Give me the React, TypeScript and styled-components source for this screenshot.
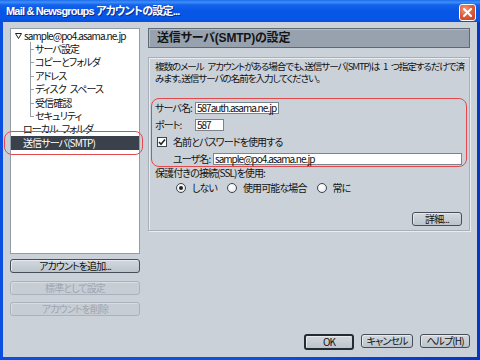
import React from 'react';
import styled, { createGlobalStyle } from 'styled-components';

const GlobalStyle = createGlobalStyle`
  html, body {
    margin: 0;
    padding: 0;
    background: #cbd1d9;
  }
  body {
    font-family: 'Liberation Sans Narrow', 'Noto Sans CJK JP', sans-serif;
    font-size: 10px;
    line-height: 12px;
    letter-spacing: -0.9px;
    font-feature-settings: 'palt';
    color: #111;
  }
`;

// en space keeps the wide gaps of the original font
const SP = '\u2002';

const treeItems = ['サーバ設定', 'コピーとフォルダ', 'アドレス', `ディスク${SP}スペース`, '受信確認', 'セキュリティ'];

const App: React.FC = () => {
  return (
    <>
      <GlobalStyle />
      <Window>
        <TitleBar>
          <Title>Mail &amp; Newsgroups アカウントの設定...</Title>
          <CloseButton>
            <svg width="9" height="9" viewBox="0 0 9 9">
              <path d="M1 1 L8 8 M8 1 L1 8" stroke="#fff" strokeWidth="2" strokeLinecap="square" />
            </svg>
          </CloseButton>
        </TitleBar>
        <Body>
          <Columns>
            <Sidebar>
              <Tree>
                <TreeRow $indent={4}>
                  <Twisty>
                    <svg width="7" height="6" viewBox="0 0 7 6">
                      <path d="M0.5 0.5 H6.5 L3.5 5.5 Z" fill="none" stroke="#222" strokeWidth="1" />
                    </svg>
                  </Twisty>
                  sample@po4.asama.ne.jp
                </TreeRow>
                {treeItems.map((t, i) => (
                  <ChildRow key={t} $last={i === treeItems.length - 1}>
                    {t}
                  </ChildRow>
                ))}
                <TreeRow $indent={12}>{`ローカル${SP}フォルダ`}</TreeRow>
                <TreeRow $indent={12} $selected>
                  送信サーバ(SMTP)
                  <RedRing />
                </TreeRow>
              </Tree>
              <SideButtons>
                <Button>アカウントを追加...</Button>
                <Button disabled>標準として設定</Button>
                <Button disabled>アカウントを削除</Button>
              </SideButtons>
            </Sidebar>
            <Main>
              <Header>送信サーバ(SMTP)の設定</Header>
              <Group>
                <Description>
                  {`複数のメール${SP}アカウントがある場合でも、送信サーバ(SMTP)は${SP}1${SP}つ指定するだけで済`}
                  <br />
                  みます。送信サーバの名前を入力してください。
                </Description>
                <RedBox>
                  <FieldRow>
                    <Label>サーバ名:</Label>
                    <Input $w={84}>587auth.asama.ne.jp</Input>
                  </FieldRow>
                  <FieldRow>
                    <Label>ポート:</Label>
                    <Input $w={29}>587</Input>
                  </FieldRow>
                  <FieldRow $indent={2}>
                    <CheckBox>
                      <svg width="8" height="8" viewBox="0 0 8 8">
                        <path d="M1 4 L3 6.2 L7 1.5" fill="none" stroke="#222" strokeWidth="1.6" />
                      </svg>
                    </CheckBox>
                    <CheckLabel>名前とパスワードを使用する</CheckLabel>
                  </FieldRow>
                  <FieldRow $indent={18}>
                    <Label>ユーザ名:</Label>
                    <Input $grow>sample@po4.asama.ne.jp</Input>
                  </FieldRow>
                </RedBox>
                <SslLabel>保護付きの接続(SSL)を使用:</SslLabel>
                <RadioRow>
                  <RadioOption>
                    <Radio $checked />
                    しない
                  </RadioOption>
                  <RadioOption>
                    <Radio />
                    使用可能な場合
                  </RadioOption>
                  <RadioOption>
                    <Radio />
                    常に
                  </RadioOption>
                </RadioRow>
                <DetailRow>
                  <Button $w={50}>詳細...</Button>
                </DetailRow>
              </Group>
            </Main>
          </Columns>
          <Footer>
            <Button $w={50} $default>OK</Button>
            <Button $w={52}>キャンセル</Button>
            <Button $w={50}>ヘルプ(H)</Button>
          </Footer>
        </Body>
      </Window>
    </>
  );
};

export default App;

const Window = styled.div`
  width: 480px;
  height: 360px;
  display: flex;
  flex-direction: column;
  overflow: hidden;
  background: linear-gradient(to right, #0a4fe0 0%, #0554e6 50%, #0038c8 100%);
`;

const TitleBar = styled.div`
  height: 22px;
  flex: none;
  display: flex;
  align-items: center;
  justify-content: space-between;
  padding: 0 4px 0 6px;
  background: linear-gradient(
    to bottom,
    #1c6cf0 0%,
    #3f8ff8 10%,
    #1463ec 22%,
    #0856e6 50%,
    #0656e8 85%,
    #0a4fd8 100%
  );
`;

const Title = styled.span`
  font-family: 'Liberation Sans', 'Noto Sans CJK JP', sans-serif;
  color: #fff;
  font-weight: bold;
  font-size: 11px;
  line-height: 14px;
  letter-spacing: -0.8px;
  text-shadow: 1px 1px 0 #0a2a90;
  white-space: nowrap;
`;

const CloseButton = styled.div`
  width: 15px;
  height: 15px;
  margin-top: 3px;
  border: 1px solid #fff;
  border-radius: 3px;
  display: flex;
  align-items: center;
  justify-content: center;
  background: radial-gradient(circle at 35% 30%, #f29a7c 0%, #e0603c 45%, #c43c1c 100%);
`;

const Body = styled.div`
  flex: 1;
  margin: 0 3px 3px;
  padding: 6px 7px 7px;
  background: #cbd1d9;
  display: flex;
  flex-direction: column;
`;

const Columns = styled.div`
  display: flex;
  gap: 8px;
`;

const Sidebar = styled.div`
  width: 130px;
  flex: none;
  display: flex;
  flex-direction: column;
`;

const Tree = styled.div`
  height: 226px;
  box-sizing: border-box;
  background: #fff;
  border: 1px solid #949ca6;
  position: relative;
`;

const TreeRow = styled.div<{ $indent: number; $selected?: boolean }>`
  position: relative;
  height: 13.4px;
  display: flex;
  align-items: center;
  padding-left: ${(p) => p.$indent}px;
  white-space: nowrap;
  background: ${(p) => (p.$selected ? '#3a414a' : 'transparent')};
  color: ${(p) => (p.$selected ? '#fff' : '#111')};
`;

const Twisty = styled.span`
  width: 7px;
  margin-right: 2px;
  display: flex;
  align-items: center;
`;

const ChildRow = styled.div<{ $last?: boolean }>`
  position: relative;
  height: 13.4px;
  display: flex;
  align-items: center;
  padding-left: 24px;
  white-space: nowrap;
  &::before {
    content: '';
    position: absolute;
    left: 19px;
    top: 0;
    height: ${(p) => (p.$last ? '50%' : '100%')};
    border-left: 1px solid #9aa0a8;
  }
  &::after {
    content: '';
    position: absolute;
    left: 19px;
    top: 50%;
    width: 4px;
    border-top: 1px solid #9aa0a8;
  }
`;

const RedRing = styled.span`
  position: absolute;
  left: -7px;
  right: -4px;
  top: -5px;
  bottom: -5px;
  border: 1px solid #e4484c;
  border-radius: 8px;
  pointer-events: none;
`;

const SideButtons = styled.div`
  margin-top: 5px;
  display: flex;
  flex-direction: column;
  gap: 7.5px;
`;

const Button = styled.button<{ $w?: number; $default?: boolean }>`
  box-sizing: border-box;
  width: ${(p) => (p.$w ? `${p.$w}px` : '100%')};
  height: ${(p) => (p.$default ? 16 : 14)}px;
  padding: 0;
  font: inherit;
  letter-spacing: inherit;
  line-height: 1;
  color: #111;
  border: ${(p) => (p.$default ? '2px solid #252b33' : '1px solid #454d57')};
  border-radius: 3px;
  background: linear-gradient(to bottom, #d2d8de 0%, #bcc4cc 100%);
  box-shadow: inset 1px 1px 0 #e6eaee;
  display: flex;
  align-items: center;
  justify-content: center;
  &:disabled {
    color: #9ea6b0;
    border-color: #aab2bc;
    background: #c6cdd5;
    box-shadow: inset 1px 1px 0 #d8dde2;
  }
`;

const Main = styled.div`
  flex: 1;
  min-width: 0;
  display: flex;
  flex-direction: column;
  gap: 9px;
`;

const Header = styled.div`
  height: 20px;
  box-sizing: border-box;
  padding-left: 8px;
  display: flex;
  align-items: center;
  background: #98a2ae;
  border: 1px solid #5f6975;
  box-shadow: inset 1px 1px 0 #b4bcc6;
  font-family: 'Liberation Sans', 'Noto Sans CJK JP', sans-serif;
  font-weight: bold;
  font-size: 12px;
  line-height: 14px;
  letter-spacing: -0.2px;
  color: #141414;
`;

const Group = styled.div`
  height: 174px;
  box-sizing: border-box;
  border: 1px solid #a7afb9;
  box-shadow: 1px 1px 0 #e9edf1, inset 1px 1px 0 #e9edf1;
  padding: 2px 2px 4px;
  display: flex;
  flex-direction: column;
`;

const Description = styled.div`
  padding: 0 4px;
  font-size: 9.6px;
  line-height: 12px;
  letter-spacing: -1.1px;
  white-space: nowrap;
`;

const RedBox = styled.div`
  margin-top: 14px;
  border: 1px solid #e4484c;
  border-radius: 8px;
  padding: 3px 4px 1px 3px;
  display: flex;
  flex-direction: column;
  gap: 5px;
`;

const FieldRow = styled.div<{ $indent?: number }>`
  height: 12px;
  display: flex;
  align-items: center;
  padding-left: ${(p) => p.$indent ?? 0}px;
`;

const Label = styled.span`
  width: 40px;
  flex: none;
  white-space: nowrap;
`;

const Input = styled.div<{ $w?: number; $grow?: boolean }>`
  box-sizing: border-box;
  width: ${(p) => (p.$w ? `${p.$w}px` : 'auto')};
  flex: ${(p) => (p.$grow ? 1 : 'none')};
  height: 12px;
  padding-left: 1px;
  background: #fff;
  border: 1px solid #7b838d;
  display: flex;
  align-items: center;
  line-height: 10px;
  letter-spacing: -1px;
  white-space: nowrap;
`;

const CheckBox = styled.span`
  width: 10px;
  height: 10px;
  box-sizing: border-box;
  border: 1px solid #3c444e;
  background: #fff;
  display: flex;
  align-items: center;
  justify-content: center;
`;

const CheckLabel = styled.span`
  margin-left: 6px;
`;

const SslLabel = styled.div`
  padding-left: 4px;
`;

const RadioRow = styled.div`
  margin-top: 3px;
  height: 12px;
  padding-left: 25px;
  display: flex;
  align-items: center;
  gap: 10px;
`;

const RadioOption = styled.span`
  display: flex;
  align-items: center;
  gap: 6px;
`;

const Radio = styled.span<{ $checked?: boolean }>`
  width: 10px;
  height: 10px;
  box-sizing: border-box;
  border: 1px solid #3c444e;
  border-radius: 50%;
  background: radial-gradient(circle at 40% 35%, #fff 0%, #eef1f4 60%, #d6dce2 100%);
  display: flex;
  align-items: center;
  justify-content: center;
  &::after {
    content: '';
    width: 4px;
    height: 4px;
    border-radius: 50%;
    background: ${(p) => (p.$checked ? '#222' : 'transparent')};
  }
`;

const DetailRow = styled.div`
  margin-top: auto;
  display: flex;
  justify-content: flex-end;
  padding-right: 5px;
`;

const Footer = styled.div`
  margin-top: auto;
  display: flex;
  justify-content: flex-end;
  gap: 7px;
`;
